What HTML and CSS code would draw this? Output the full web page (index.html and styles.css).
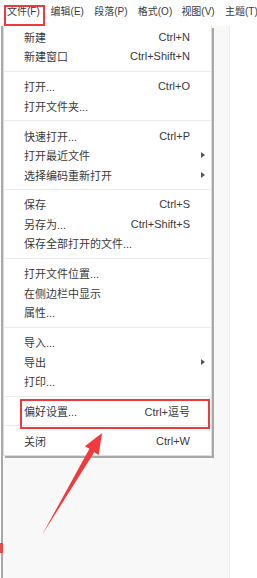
FILE: index.html
```html
<!DOCTYPE html>
<html lang="zh-CN">
<head>
  <meta charset="utf-8">
  <title>文件菜单</title>
  <link rel="stylesheet" href="styles.css">
</head>
<body>
<div class="window">
  <div class="menubar">
    <span class="top-item">文件(F)</span>
    <span class="top-item">编辑(E)</span>
    <span class="top-item">段落(P)</span>
    <span class="top-item">格式(O)</span>
    <span class="top-item">视图(V)</span>
    <span class="top-item">主题(T)</span>
  </div>
  <div class="workspace">
    <div class="editor"></div>
    <div class="side"></div>
  </div>

  <div class="mark-top"></div>
  <div class="edge-mark"></div>

  <ul class="dropdown">
    <li class="item"><span>新建</span><span class="key">Ctrl+N</span></li>
    <li class="item"><span>新建窗口</span><span class="key">Ctrl+Shift+N</span></li>
    <li class="sep"></li>
    <li class="item"><span>打开...</span><span class="key">Ctrl+O</span></li>
    <li class="item"><span>打开文件夹...</span></li>
    <li class="sep"></li>
    <li class="item"><span>快速打开...</span><span class="key">Ctrl+P</span></li>
    <li class="item sub"><span>打开最近文件</span></li>
    <li class="item sub"><span>选择编码重新打开</span></li>
    <li class="sep"></li>
    <li class="item"><span>保存</span><span class="key">Ctrl+S</span></li>
    <li class="item"><span>另存为...</span><span class="key">Ctrl+Shift+S</span></li>
    <li class="item"><span>保存全部打开的文件...</span></li>
    <li class="sep"></li>
    <li class="item"><span>打开文件位置...</span></li>
    <li class="item"><span>在侧边栏中显示</span></li>
    <li class="item"><span>属性...</span></li>
    <li class="sep"></li>
    <li class="item"><span>导入...</span></li>
    <li class="item sub"><span>导出</span></li>
    <li class="item"><span>打印...</span></li>
    <li class="sep"></li>
    <li class="item"><span>偏好设置...</span><span class="key">Ctrl+逗号</span></li>
    <li class="sep"></li>
    <li class="item"><span>关闭</span><span class="key">Ctrl+W</span></li>
  </ul>

  <div class="mark-pref"></div>

  <svg class="pointer" width="257" height="578" viewBox="0 0 257 578">
    <polygon points="102,433 98.7,455 94.2,452.3 42,535 89.4,448.8 84.9,446.2" fill="#f2393c"/>
  </svg>
</div>
</body>
</html>
```

FILE: styles.css
```css
html, body {
  margin: 0;
  padding: 0;
  background: #fff;
}

body {
  font-family: "Liberation Sans", "Noto Sans CJK SC", sans-serif;
  font-size: 11px;
  color: #3a3a3a;
}

.window {
  position: relative;
  width: 257px;
  height: 578px;
  overflow: hidden;
  display: flex;
  flex-direction: column;
}

/* top menu bar */
.menubar {
  height: 26px;
  display: flex;
  align-items: center;
  padding-left: 7px;
  white-space: nowrap;
  background: #fff;
}

.top-item {
  flex: 0 0 43.6px;
  font-size: 10px;
  line-height: 14px;
  padding-bottom: 3px;
}

.workspace {
  flex: 1;
  display: flex;
  border-left: 2px solid #a9a9a9;
  margin-left: 1px;
}

.editor {
  width: 226px;
  background: #f8f8f8;
  border-right: 1px solid #ececec;
}

.side {
  flex: 1;
  background: #fff;
}

/* dropdown overlay */
.dropdown {
  position: absolute;
  left: 3px;
  top: 26px;
  width: 207px;
  margin: 0;
  padding: 1px 0 4px;
  list-style: none;
  background: #fff;
  border: 1px solid #dcdcdc;
  border-top: none;
  box-shadow: 2px 2px 0 #a8a8a8;
}

.item {
  position: relative;
  height: 19.5px;
  display: flex;
  align-items: center;
  justify-content: space-between;
  padding: 0 21px 0 20px;
  white-space: nowrap;
}

.sub::after {
  content: "";
  position: absolute;
  right: 6px;
  top: 7px;
  border-left: 4px solid #555;
  border-top: 3px solid transparent;
  border-bottom: 3px solid transparent;
}

.sep {
  height: 1px;
  margin: 4.7px 0;
  background: #ebebeb;
}

/* annotation marks */
.mark-top {
  position: absolute;
  left: 4px;
  top: 5px;
  width: 37px;
  height: 17px;
  border: 2px solid #ef3a3d;
}

.mark-pref {
  position: absolute;
  left: 20px;
  top: 399px;
  width: 186px;
  height: 26px;
  border: 2px solid #ef3a3d;
}

.edge-mark {
  position: absolute;
  left: 0;
  top: 543px;
  width: 3px;
  height: 10px;
  background: #e84a4a;
}

.pointer {
  position: absolute;
  left: 0;
  top: 0;
}
```
